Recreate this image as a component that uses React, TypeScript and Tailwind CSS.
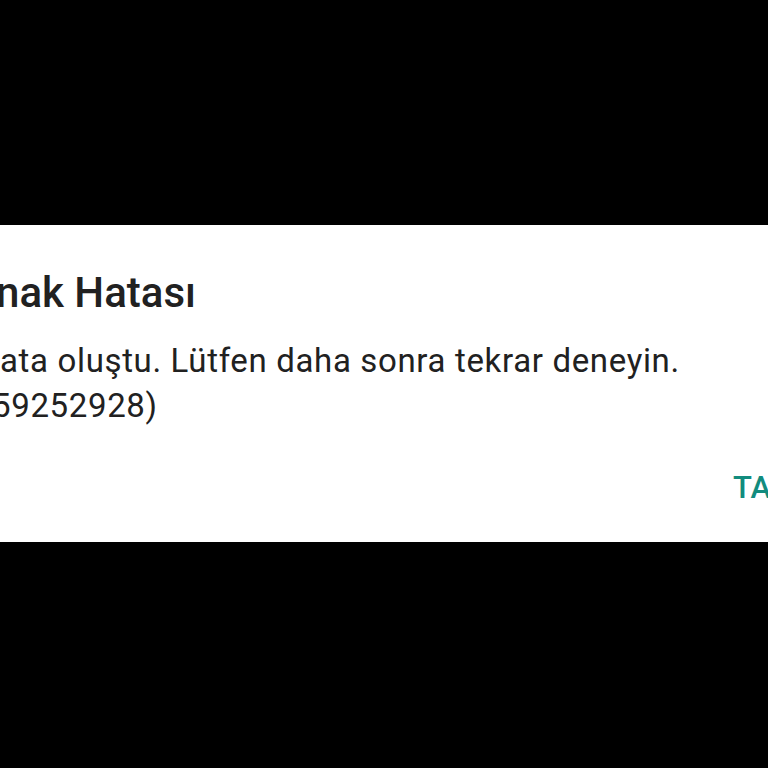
export default function App() {
  return (
    <div className="w-[768px] h-[768px] bg-black overflow-hidden flex flex-col" style={{ fontFamily: "Roboto, 'Noto Sans', sans-serif" }}>
      <div className="h-[225px] shrink-0" />
      <div className="h-[317px] shrink-0 bg-white overflow-hidden flex flex-col pt-[44px] whitespace-nowrap">
        <h2 className="text-[42px] leading-[48px] font-medium text-[#212121] ml-[-4px]">nak Hatası</h2>
        <p className="mt-[21px] text-[33px] leading-[45px] tracking-[0.65px] text-[#212121]">
          <span className="block">ata oluştu. Lütfen daha sonra tekrar deneyin.</span>
          <span className="block ml-[-8px]">59252928)</span>
        </p>
        <div className="mt-[42px] pl-[733px]">
          <button type="button" className="text-[31px] leading-[36px] font-medium text-[#128c7e] uppercase">Tamam</button>
        </div>
      </div>
    </div>
  );
}
